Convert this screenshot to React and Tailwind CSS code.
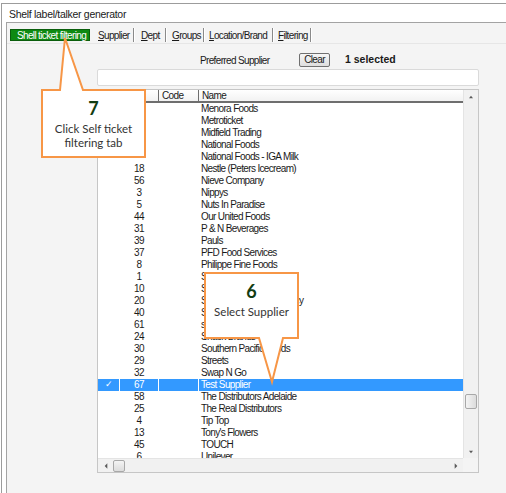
import React from "react";

const rows = [
  ["", "Menora Foods"],
  ["", "Metroticket"],
  ["", "Midfield Trading"],
  ["", "National Foods"],
  ["", "National Foods - IGA Milk"],
  ["18", "Nestle (Peters Icecream)"],
  ["56", "Nieve Company"],
  ["3", "Nippys"],
  ["5", "Nuts In Paradise"],
  ["44", "Our United Foods"],
  ["31", "P & N Beverages"],
  ["39", "Pauls"],
  ["37", "PFD Food Services"],
  ["8", "Philippe Fine Foods"],
  ["1", "Sanitarium"],
  ["10", "Simplot"],
  ["20", "Southern Cross Pharmacy"],
  ["40", "Sara Lee"],
  ["61", "smiths"],
  ["24", "Snack Brands"],
  ["30", "Southern Pacific Foods"],
  ["29", "Streets"],
  ["32", "Swap N Go"],
  ["67", "Test Supplier", true],
  ["58", "The Distributors Adelaide"],
  ["25", "The Real Distributors"],
  ["4", "Tip Top"],
  ["13", "Tony's Flowers"],
  ["45", "TOUCH"],
  ["6", "Unilever"],
];

function Tab({ first, rest, w, ml }) {
  return (
    <>
      <div className={`${w} ${ml} h-[13px] leading-[13px] whitespace-nowrap`}>
        <span className="underline">{first}</span>
        {rest}
      </div>
      <div className="w-[2px] h-[14px] border-l border-r border-l-[#8a8a8a] border-r-white" />
    </>
  );
}

function Tri({ dir }) {
  const p = {
    up: "M1 5 L4 1 L7 5 Z",
    down: "M1 1 L4 5 L7 1 Z",
    left: "M5 0 L1 4 L5 8 Z",
    right: "M1 0 L5 4 L1 8 Z",
  }[dir];
  const vb = dir === "up" || dir === "down" ? "0 0 8 6" : "0 0 6 8";
  const cls = dir === "up" || dir === "down" ? "w-[6px] h-[4px]" : "w-[4px] h-[6px]";
  return (
    <svg viewBox={vb} className={cls}>
      <path d={p} fill="#5a5a5a" />
    </svg>
  );
}

export default function App() {
  return (
    <div className="relative w-[506px] h-[493px] overflow-hidden bg-white font-['Liberation_Sans',Arial,sans-serif] text-[#1a1a1a]">
      <div className="flex flex-col h-full pt-[3px] pl-[1px]">
        <div className="flex flex-col flex-1 border-t border-l border-[#9c9c9c]">
          <div className="h-[18px] pl-[7px] pt-[4px] text-[10.5px] leading-[12px] tracking-[-0.3px] text-[#1a1a1a]">
            Shelf label/talker generator
          </div>
          <div className="flex-1 ml-[4px] border-t border-l border-[#a3a3a3] bg-[#f4f4f4] flex flex-col text-[10px] tracking-[-0.65px]">
            {/* tabs */}
            <div className="flex items-center mt-[5px] h-[14px] pl-[3px] border-b border-[#e6e6e6] pb-[1px] box-content">
              <div className="w-[80px] h-[12px] leading-[11px] bg-[#0e8a12] border border-[#0a5e0c] text-white pl-[6px] whitespace-nowrap">
                Shell ticket filtering
              </div>
              <Tab first="S" rest="upplier" w="w-[35px]" ml="ml-[8px]" />
              <Tab first="D" rest="ept" w="w-[24px]" ml="ml-[6px]" />
              <Tab first="G" rest="roups" w="w-[31px]" ml="ml-[5px]" />
              <Tab first="L" rest="ocation/Brand" w="w-[63px]" ml="ml-[4px]" />
              <Tab first="F" rest="iltering" w="w-[32px]" ml="ml-[4px]" />
            </div>
            {/* controls */}
            <div className="flex items-center mt-[9px] h-[14px]">
              <div className="ml-[193px] w-[99px] whitespace-nowrap">Preferred Supplier</div>
              <div className="w-[31px] h-[14px] leading-[12px] text-center border border-[#707070] rounded-[2px] bg-gradient-to-b from-[#f6f6f6] to-[#dedede]">
                Clear
              </div>
              <div className="ml-[15px] font-bold text-[10.5px] tracking-[0px]">1 selected</div>
            </div>
            {/* search box */}
            <div className="ml-[90px] mt-[2px] w-[382px] h-[17px] bg-white border border-[#dadada] rounded-[2px]" />
            {/* list */}
            <div className="ml-[90px] mt-[3px] w-[382px] h-[384px] border border-[#c6c6c6] bg-white flex flex-col">
              <div className="flex h-[368px]">
                <div className="flex-1 flex flex-col overflow-hidden">
                  <div className="flex h-[13px] shrink-0 border-b-2 border-[#6e6e6e] bg-gradient-to-b from-white to-[#f2f2f2] leading-[11px]">
                    <div className="w-[21px]" />
                    <div className="w-[39px]" />
                    <div className="w-[40px] border-l border-[#6e6e6e] pl-[3px]">Code</div>
                    <div className="flex-1 border-l border-[#6e6e6e] pl-[3px]">Name</div>
                  </div>
                  {rows.map(([code, name, sel], i) => (
                    <div
                      key={i}
                      className={`flex h-[12px] shrink-0 leading-[11px] ${sel ? "bg-[#3399ff] text-white" : ""}`}
                    >
                      <div className="w-[21px] text-center text-[9px]">{sel ? "✓" : ""}</div>
                      <div className={`w-[39px] border-l text-center ${sel ? "border-white" : "border-transparent"}`}>{code}</div>
                      <div className={`w-[40px] border-l ${sel ? "border-white" : "border-transparent"}`} />
                      <div className={`flex-1 border-l pl-[2px] whitespace-nowrap ${sel ? "border-white" : "border-transparent"}`}>{name}</div>
                    </div>
                  ))}
                </div>
                {/* vertical scrollbar */}
                <div className="w-[15px] flex flex-col bg-[#f1f1f1] border-l border-[#e4e4e4]">
                  <div className="h-[13px] flex items-center justify-center">
                    <Tri dir="up" />
                  </div>
                  <div className="h-[291px]" />
                  <div className="mx-[1px] h-[15px] rounded-[2px] border border-[#a8a8a8] bg-gradient-to-r from-[#f4f4f4] to-[#dcdcdc]" />
                  <div className="flex-1" />
                  <div className="h-[13px] flex items-center justify-center">
                    <Tri dir="down" />
                  </div>
                </div>
              </div>
              {/* horizontal scrollbar */}
              <div className="flex h-[14px]">
                <div className="flex-1 flex items-center bg-[#f1f1f1] border-t border-[#e4e4e4]">
                  <div className="w-[15px] flex justify-center">
                    <Tri dir="left" />
                  </div>
                  <div className="w-[12px] h-[12px] rounded-[2px] border border-[#a8a8a8] bg-gradient-to-b from-[#f4f4f4] to-[#dcdcdc]" />
                  <div className="flex-1" />
                  <div className="w-[15px] flex justify-center">
                    <Tri dir="right" />
                  </div>
                </div>
                <div className="w-[15px] bg-[#f4f4f4]" />
              </div>
            </div>
          </div>
        </div>
      </div>

      {/* callouts */}
      <svg className="absolute left-0 top-0 w-[506px] h-[493px] pointer-events-none" viewBox="0 0 506 493">
        <path
          d="M42 90 L60 90 L65 38 L83 90 L145 90 L145 157 L42 157 Z"
          fill="white"
          stroke="#f79646"
          strokeWidth="2"
          strokeLinejoin="miter"
        />
        <path
          d="M205 273 L298 273 L298 338 L283 338 L272 382 L259 338 L205 338 Z"
          fill="white"
          stroke="#f79646"
          strokeWidth="2"
          strokeLinejoin="miter"
        />
      </svg>
      <div className="absolute left-[43px] top-[97px] w-[101px] flex flex-col items-center font-['Lato',sans-serif] text-[#333]">
        <div className="text-[18px] leading-[22px] font-bold text-[#123d12]">7</div>
        <div className="text-[11.5px] leading-[14px] mt-[3px]">Click Self ticket</div>
        <div className="text-[11.5px] leading-[14px]">filtering tab</div>
      </div>
      <div className="absolute left-[206px] top-[280px] w-[91px] flex flex-col items-center font-['Lato',sans-serif] text-[#333]">
        <div className="text-[18px] leading-[22px] font-bold text-[#123d12]">6</div>
        <div className="text-[11.5px] leading-[14px] mt-[3px]">Select Supplier</div>
      </div>
    </div>
  );
}
